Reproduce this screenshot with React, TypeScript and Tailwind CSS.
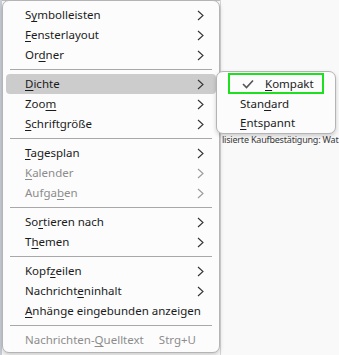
import { ReactNode } from 'react'

type Item =
  | { kind: 'sep' }
  | { kind: 'item'; label: ReactNode; arrow?: boolean; disabled?: boolean; active?: boolean; shortcut?: string }

function U({ children }: { children: ReactNode }) {
  return <span className="underline decoration-1 underline-offset-2">{children}</span>
}

const items: Item[] = [
  { kind: 'item', label: <>S<U>y</U>mbolleisten</>, arrow: true },
  { kind: 'item', label: <><U>F</U>ensterlayout</>, arrow: true },
  { kind: 'item', label: <>Or<U>d</U>ner</>, arrow: true },
  { kind: 'sep' },
  { kind: 'item', label: <><U>D</U>ichte</>, arrow: true, active: true },
  { kind: 'item', label: <>Zoo<U>m</U></>, arrow: true },
  { kind: 'item', label: <><U>S</U>chriftgröße</>, arrow: true },
  { kind: 'sep' },
  { kind: 'item', label: <><U>T</U>agesplan</>, arrow: true },
  { kind: 'item', label: <><U>K</U>alender</>, arrow: true, disabled: true },
  { kind: 'item', label: <>Aufga<U>b</U>en</>, arrow: true, disabled: true },
  { kind: 'sep' },
  { kind: 'item', label: <>So<U>r</U>tieren nach</>, arrow: true },
  { kind: 'item', label: <>T<U>h</U>emen</>, arrow: true },
  { kind: 'sep' },
  { kind: 'item', label: <>Kopf<U>z</U>eilen</>, arrow: true },
  { kind: 'item', label: <>Nachricht<U>e</U>ninhalt</>, arrow: true },
  { kind: 'item', label: <><U>A</U>nhänge eingebunden anzeigen</> },
  { kind: 'sep' },
  { kind: 'item', label: <>Nachrichten-<U>Q</U>uelltext</>, disabled: true, shortcut: 'Strg+U' },
]

function Chevron({ muted }: { muted?: boolean }) {
  return (
    <svg width="7" height="11" viewBox="0 0 7 11" className="shrink-0">
      <polyline
        points="1,1 6,5.5 1,10"
        fill="none"
        stroke={muted ? '#9a9a9a' : '#333333'}
        strokeWidth="1.1"
      />
    </svg>
  )
}

export default function App() {
  return (
    <div
      className="relative h-[355px] w-[339px] overflow-hidden bg-[#f9f9f9] text-[11.5px] text-[#1b1b1b]"
      style={{ fontFamily: '"Segoe UI", "Noto Sans", sans-serif' }}
    >
      {/* window behind the menu */}
      <div className="flex h-full">
        <div className="w-[2px] shrink-0 bg-[#c8ccd6]" />
        <div className="w-[218px] shrink-0 border-t border-[#bcbcbc]" />
        <div className="flex min-w-0 flex-1 flex-col border-l border-[#d6d6d6] pt-[134px]">
          <div className="whitespace-nowrap pl-[1px] text-[9px] leading-[12px] tracking-[-0.2px] text-[#3a3a3a]">
            lisierte Kaufbestätigung: Wat
          </div>
        </div>
      </div>

      {/* main menu */}
      <div className="absolute left-[2px] top-0 w-[218px] rounded-[7px] border border-[#b4b4b4] bg-[#fcfcfc] pt-[4px] pb-[2px] shadow-[0_2px_4px_rgba(0,0,0,0.18)]">
        {items.map((it, i) =>
          it.kind === 'sep' ? (
            <div key={i} className="flex h-[9px] items-center px-[7px]">
              <div className="h-px w-full bg-[#a8a8a8]" />
            </div>
          ) : (
            <div
              key={i}
              className={`mx-[3px] flex h-5 items-center rounded-[4px] pl-[19px] pr-[12px] ${
                it.active ? 'bg-[#cccccc]' : ''
              } ${it.disabled ? 'text-[#8c8c8c]' : ''}`}
            >
              <span className="flex-1 whitespace-nowrap">{it.label}</span>
              {it.shortcut && <span className="mr-[8px]">{it.shortcut}</span>}
              {it.arrow && <Chevron muted={it.disabled} />}
            </div>
          )
        )}
      </div>

      {/* submenu */}
      <div className="absolute left-[216px] top-[71px] w-[120px] rounded-[7px] border border-[#b4b4b4] bg-[#fcfcfc] pt-[1px] shadow-[0_2px_4px_rgba(0,0,0,0.18)]">
        <div className="mx-[11px] flex h-[21px] items-center border-2 border-[#1fe01f] pl-[12px]">
          <svg width="12" height="10" viewBox="0 0 12 10" className="mr-[11px]">
            <polyline points="1,5 4.5,8.5 11,1.5" fill="none" stroke="#555555" strokeWidth="1.6" />
          </svg>
          <span>
            <U>K</U>ompakt
          </span>
        </div>
        <div className="flex h-[19px] items-center pl-[23px]">
          <span>
            Stan<U>d</U>ard
          </span>
        </div>
        <div className="flex h-5 items-center pl-[23px]">
          <span>
            <U>E</U>ntspannt
          </span>
        </div>
      </div>
    </div>
  )
}
